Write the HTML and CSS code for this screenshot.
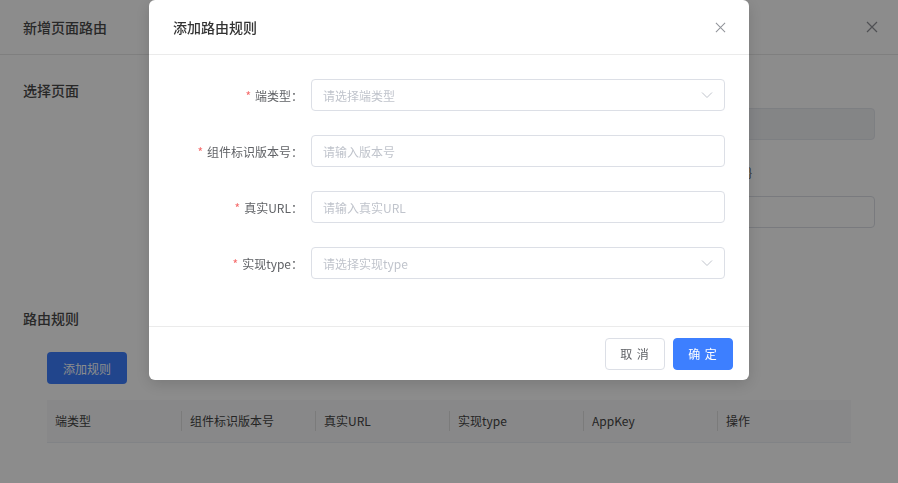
FILE: index.html
```html
<!DOCTYPE html>
<html lang="zh-CN">
<head>
<meta charset="utf-8">
<title>添加路由规则</title>
<link rel="stylesheet" href="styles.css">
</head>
<body>
<div class="page">
  <div class="page-header">
    <span class="page-title">新增页面路由</span>
    <svg class="close-icon" width="12" height="12" viewBox="0 0 12 12"><path d="M1 1L11 11M11 1L1 11" stroke="#909399" stroke-width="1.2" fill="none"/></svg>
  </div>
  <div class="page-body">
    <div class="pick-section">
      <div class="section-title">选择页面</div>
      <div class="pick-form">
        <div class="pick-label first">页面名称</div>
        <div class="pick-input disabled"></div>
        <div class="pick-label second">页面参数 {key}</div>
        <div class="pick-input"></div>
      </div>
    </div>
    <div class="section-title rules-title">路由规则</div>
    <div class="rules-body">
      <button class="add-btn">添加规则</button>
      <div class="table-head">
        <div class="th">端类型</div>
        <div class="th">组件标识版本号</div>
        <div class="th">真实URL</div>
        <div class="th">实现type</div>
        <div class="th">AppKey</div>
        <div class="th">操作</div>
      </div>
    </div>
  </div>
</div>

<div class="mask"></div>

<div class="dialog">
  <div class="dialog-header">
    <span class="dialog-title">添加路由规则</span>
    <svg class="close-icon" width="11" height="11" viewBox="0 0 12 12"><path d="M1 1L11 11M11 1L1 11" stroke="#909399" stroke-width="1.1" fill="none"/></svg>
  </div>
  <div class="dialog-body">
    <div class="form-row">
      <label class="form-label"><span class="req">*</span>端类型：</label>
      <div class="field select">
        <span class="placeholder">请选择端类型</span>
        <svg class="chevron" width="12" height="8" viewBox="0 0 12 8"><path d="M1 1.5L6 6.5L11 1.5" stroke="#c0c4cc" stroke-width="1" fill="none"/></svg>
      </div>
    </div>
    <div class="form-row">
      <label class="form-label"><span class="req">*</span>组件标识版本号：</label>
      <div class="field"><span class="placeholder">请输入版本号</span></div>
    </div>
    <div class="form-row">
      <label class="form-label"><span class="req">*</span>真实URL：</label>
      <div class="field"><span class="placeholder">请输入真实URL</span></div>
    </div>
    <div class="form-row">
      <label class="form-label"><span class="req">*</span>实现type：</label>
      <div class="field select">
        <span class="placeholder">请选择实现type</span>
        <svg class="chevron" width="12" height="8" viewBox="0 0 12 8"><path d="M1 1.5L6 6.5L11 1.5" stroke="#c0c4cc" stroke-width="1" fill="none"/></svg>
      </div>
    </div>
  </div>
  <div class="dialog-footer">
    <button class="btn btn-cancel">取 消</button>
    <button class="btn btn-primary">确 定</button>
  </div>
</div>
</body>
</html>
```

FILE: styles.css
```css
* { box-sizing: border-box; }
html, body {
  margin: 0;
  padding: 0;
  width: 898px;
  height: 483px;
  overflow: hidden;
  font-family: "Noto Sans CJK SC", "Noto Sans", sans-serif;
  color: #333;
  background: #fff;
}

.page {
  width: 898px;
  height: 483px;
  background: #fff;
}
.page-header {
  height: 55px;
  border-bottom: 1px solid #e8e8e8;
  padding: 0 20px 0 23px;
  display: flex;
  align-items: center;
  justify-content: space-between;
}
.page-title {
  font-size: 14px;
  font-weight: 500;
  color: #4a4a4a;
}
.close-icon { display: block; }

.page-body {
  padding: 0 23px;
}
.pick-section {
  display: flex;
  padding-top: 25px;
}
.section-title {
  font-size: 14px;
  font-weight: 500;
  line-height: 20px;
  color: #4a4a4a;
  width: 380px;
}
.pick-form {
  flex: 1;
  display: flex;
  flex-direction: column;
}
.pick-label {
  font-size: 12px;
  line-height: 20px;
  color: #555;
  text-align: right;
  margin-bottom: 8px;
  padding-right: 123px;
}
.pick-label.first {
  padding-right: 200px;
}
.pick-label.second {
  margin-top: 22px;
  margin-bottom: 14px;
}
.pick-input {
  height: 32px;
  border: 1px solid #dcdfe6;
  border-radius: 4px;
  background: #fff;
}
.pick-input.disabled {
  background: #f0f2f5;
  border-color: #e4e7ed;
}

.rules-title {
  margin-top: 80px;
}
.rules-body {
  padding: 24px 24px 0;
}
.add-btn {
  width: 80px;
  height: 32px;
  border: none;
  border-radius: 4px;
  background: #3d7fff;
  color: #fff;
  font-family: inherit;
  font-size: 12px;
  padding: 0;
}
.table-head {
  margin-top: 16px;
  width: 804px;
  height: 43px;
  background: #f8f8f9;
  border-bottom: 1px solid #ebeef5;
  display: grid;
  grid-template-columns: repeat(6, 1fr);
  align-items: center;
}
.th {
  font-size: 12px;
  color: #444;
  padding-left: 8px;
  line-height: 20px;
  border-left: 1px solid #e0e0e0;
}
.th:first-child { border-left: none; }

.mask {
  position: fixed;
  inset: 0;
  background: rgba(0, 0, 0, 0.45);
}

.dialog {
  position: fixed;
  left: 149px;
  top: 0;
  width: 600px;
  height: 380px;
  background: #fff;
  border-radius: 6px;
  box-shadow: 0 4px 16px rgba(0, 0, 0, 0.15);
  display: flex;
  flex-direction: column;
}
.dialog-header {
  height: 55px;
  border-bottom: 1px solid #ebebeb;
  padding: 0 23px 0 24px;
  display: flex;
  align-items: center;
  justify-content: space-between;
}
.dialog-title {
  font-size: 14px;
  font-weight: 500;
  color: #333;
}
.dialog-body {
  flex: 1;
  padding: 24px 24px 0;
}
.form-row {
  display: flex;
  align-items: center;
  height: 32px;
  margin-bottom: 24px;
}
.form-label {
  width: 138px;
  padding-right: 8px;
  text-align: right;
  font-size: 12px;
  color: #606266;
  white-space: nowrap;
}
.req {
  color: #f56c6c;
  margin-right: 4px;
}
.field {
  width: 414px;
  height: 32px;
  border: 1px solid #dcdfe6;
  border-radius: 4px;
  padding: 0 11px;
  display: flex;
  align-items: center;
  justify-content: space-between;
}
.placeholder {
  font-size: 12px;
  color: #c0c4cc;
}
.chevron {
  display: block;
}

.dialog-footer {
  height: 54px;
  border-top: 1px solid #ebebeb;
  padding: 0 16px;
  display: flex;
  align-items: center;
  justify-content: flex-end;
  gap: 8px;
}
.btn {
  width: 60px;
  height: 32px;
  border-radius: 4px;
  font-family: inherit;
  font-size: 12px;
  padding: 0;
  letter-spacing: 1px;
  cursor: pointer;
}
.btn-cancel {
  background: #fff;
  border: 1px solid #dcdfe6;
  color: #606266;
}
.btn-primary {
  background: #3d7fff;
  border: 1px solid #3d7fff;
  color: #fff;
}
```
